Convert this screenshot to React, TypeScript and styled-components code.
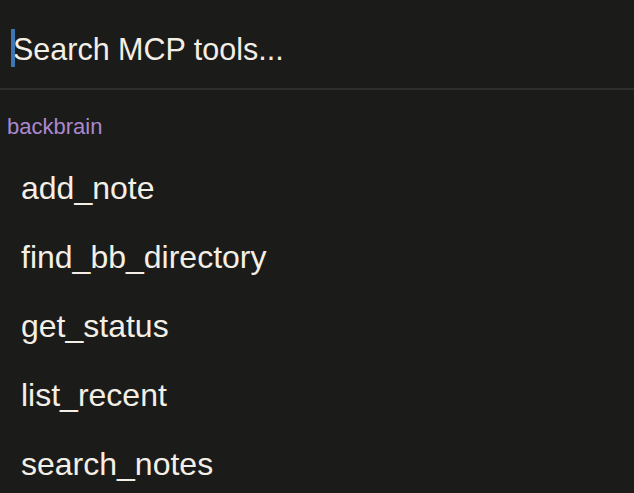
import { FC } from "react";
import styled, { createGlobalStyle } from "styled-components";

const tools = [
  "add_note",
  "find_bb_directory",
  "get_status",
  "list_recent",
  "search_notes",
];

const App: FC = () => {
  return (
    <>
      <GlobalStyle />
      <StyledPalette>
        <StyledSearchBar>
          <StyledCaret />
          <StyledPlaceholder>Search MCP tools...</StyledPlaceholder>
        </StyledSearchBar>
        <StyledGroup>
          <StyledGroupLabel>backbrain</StyledGroupLabel>
          {tools.map((tool) => (
            <StyledItem key={tool}>{tool}</StyledItem>
          ))}
        </StyledGroup>
      </StyledPalette>
    </>
  );
};

export default App;

const GlobalStyle = createGlobalStyle`
  html, body {
    margin: 0;
    padding: 0;
    background-color: #1b1b19;
    height: 100%;
    overflow: hidden;
  }
`;

const StyledPalette = styled.div`
  display: flex;
  flex-direction: column;
  width: 634px;
  height: 493px;
  background-color: #1b1b19;
  font-family: "Liberation Sans", Arial, sans-serif;
  color: #f4efe6;
  overflow: hidden;
`;

const StyledSearchBar = styled.div`
  position: relative;
  flex-shrink: 0;
  display: flex;
  align-items: flex-start;
  height: 90px;
  padding: 29px 0 0 13px;
  border-bottom: 2px solid #2e2e2c;
  box-sizing: border-box;
`;

const StyledCaret = styled.span`
  position: absolute;
  left: 11px;
  top: 29px;
  width: 4px;
  height: 38px;
  background-color: #3a77b3;
`;

const StyledPlaceholder = styled.span`
  font-size: 30.5px;
  line-height: 40px;
`;

const StyledGroup = styled.div`
  flex-shrink: 0;
  display: flex;
  flex-direction: column;
  padding-top: 24px;
`;

const StyledGroupLabel = styled.div`
  padding-left: 7px;
  font-size: 22px;
  line-height: 26px;
  color: #ab89d0;
  margin-bottom: 14px;
`;

const StyledItem = styled.div`
  flex-shrink: 0;
  padding-left: 21px;
  font-size: 32px;
  line-height: 69px;
`;
